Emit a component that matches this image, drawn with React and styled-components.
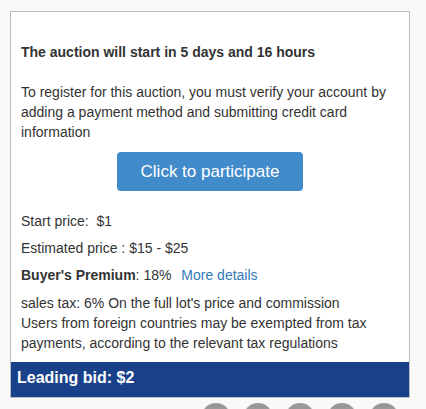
import React from 'react'
import styled, { createGlobalStyle } from 'styled-components'

const GlobalStyle = createGlobalStyle`
body {
  margin: 0;
  background: #f9f9f9;
  font-family: "Liberation Sans", Arial, sans-serif;
  color: #333;
}
`

const Page = styled.div`
width: 400px;
padding: 11px 0 0 10px;
`

const Card = styled.div`
border: 1px solid #bdbdbd;
background: #fff;
`

const Body = styled.div`
padding: 30px 10px 9px;
font-size: 14px;
line-height: 20px;
`

const Heading = styled.h4`
margin: 0 0 20px;
font-size: 14px;
font-weight: 700;
line-height: 20px;
`

const Text = styled.p`
margin: 0;
`

const ButtonRow = styled.div`
display: flex;
justify-content: center;
margin: 10px 0 20px;
`

const Button = styled.button`
height: 39px;
padding: 0 24px;
border: none;
border-radius: 4px;
background: #428bca;
color: #fff;
font-family: inherit;
font-size: 17px;
cursor: pointer;
`

const Row = styled.div`
margin-bottom: ${(props) => props.last ? '8px' : '7px'};
`

const Link = styled.a`
margin-left: 6px;
color: #337ab7;
text-decoration: none;
`

const Footer = styled.div`
background: #19418a;
color: #fff;
font-size: 16px;
font-weight: 700;
line-height: 20px;
padding: 6px 6px 9px;
`

const Share = styled.div`
display: flex;
justify-content: flex-end;
gap: 12px;
padding: 5px 11px 0 0;
`

const Circle = styled.span`
width: 30px;
height: 30px;
border-radius: 50%;
background: #999;
`

const App = () => {
    return (
        <Page>
            <GlobalStyle />
            <Card>
                <Body>
                    <Heading>The auction will start in 5 days and 16 hours</Heading>
                    <Text>To register for this auction, you must verify your account by adding a payment method and submitting credit card information</Text>
                    <ButtonRow>
                        <Button>Click to participate</Button>
                    </ButtonRow>
                    <Row>Start price:&nbsp; $1</Row>
                    <Row>Estimated price : $15 - $25</Row>
                    <Row last><b>Buyer's Premium</b>: 18% <Link href="#">More details</Link></Row>
                    <Text>sales tax: 6% On the full lot's price and commission</Text>
                    <Text>Users from foreign countries may be exempted from tax payments, according to the relevant tax regulations</Text>
                </Body>
                <Footer>Leading bid: $2</Footer>
            </Card>
            <Share>
                {[0, 1, 2, 3, 4].map((i) => <Circle key={i} />)}
            </Share>
        </Page>
    )
}

export default App
